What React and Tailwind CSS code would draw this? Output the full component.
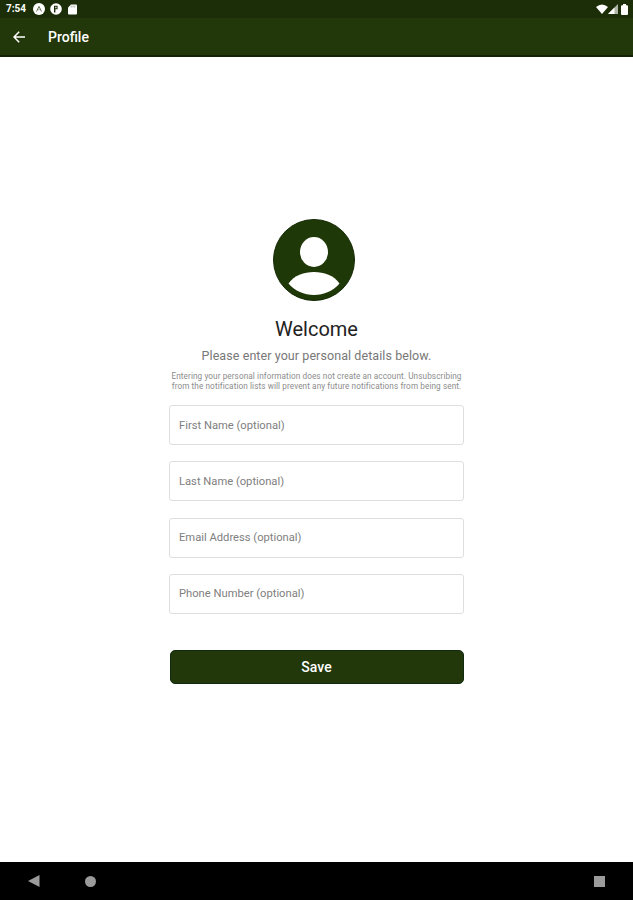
import React from 'react';

const fields = [
  { name: 'firstName', type: 'text', label: 'First Name (optional)' },
  { name: 'lastName', type: 'text', label: 'Last Name (optional)' },
  { name: 'email', type: 'email', label: 'Email Address (optional)' },
  { name: 'phone', type: 'tel', label: 'Phone Number (optional)' },
];

const StatusBar = () => (
  <div className="flex h-[18px] items-center justify-between bg-[#1c2e07] pl-[6px] pr-[5px] text-white">
    <div className="flex items-center">
      <span className="w-[27px] text-[10px] font-bold leading-[18px]">7:54</span>
      <svg width="12" height="12" viewBox="0 0 12 12">
        <circle cx="6" cy="6" r="6" fill="#fff" />
        <path d="M3.5 8.5 6 3.4l2.5 5.1M6 6.2v1" fill="none" stroke="#1c2e07" strokeWidth="0.9" opacity="0.75" />
      </svg>
      <svg width="12" height="12" viewBox="0 0 12 12" className="ml-[5px]">
        <circle cx="6" cy="6" r="5.8" fill="#fff" />
        <path d="M4 2.8h3.6v3.4H5.4v3.2H4z" fill="#1c2e07" />
        <path d="M5.3 3.8h1.2v1.5H5.3z" fill="#fff" />
      </svg>
      <svg width="9" height="11" viewBox="0 0 9 11" className="ml-[6px]">
        <path d="M3 .5h5a1 1 0 0 1 1 1v8a1 1 0 0 1-1 1H1a1 1 0 0 1-1-1V3.5z" fill="#fff" />
        <path d="M3.2 1.5v2M5 1.5v2M6.8 1.5v2" stroke="#1c2e07" strokeWidth="0.6" opacity="0.6" />
      </svg>
    </div>
    <div className="flex items-center">
      <svg width="12" height="10" viewBox="0 0 12 10">
        <path d="M0 3Q6-2 12 3L6 10z" fill="#fff" />
      </svg>
      <svg width="10" height="10" viewBox="0 0 10 10">
        <path d="M10 0v10H0z" fill="#fff" opacity="0.65" />
        <path d="M6.5 3.5V10H0z" fill="#fff" />
      </svg>
      <svg width="7" height="11" viewBox="0 0 7 11" className="ml-[3px]">
        <path d="M2 0h3v1.2h1a1 1 0 0 1 1 1V10a1 1 0 0 1-1 1H1a1 1 0 0 1-1-1V2.2a1 1 0 0 1 1-1h1z" fill="#fff" />
      </svg>
    </div>
  </div>
);

const AppBar = () => (
  <header className="flex h-[39px] items-center border-b-2 border-[#142205] bg-[#22380a] pl-[13px] text-white">
    <button type="button" aria-label="Back" className="mr-[23px]">
      <svg width="12" height="12" viewBox="0 0 12 12" fill="none" stroke="#fff" strokeWidth="1.5">
        <path d="M12 6H1.2M6.2.8 1 6l5.2 5.2" />
      </svg>
    </button>
    <h1 className="text-[14px] font-medium leading-[20px]">Profile</h1>
  </header>
);

const Avatar = () => (
  <svg width="82" height="82" viewBox="0 0 82 82" className="mr-[5px]">
    <circle cx="41" cy="41" r="40.5" fill="#1f3808" stroke="#142a05" />
    <ellipse cx="41" cy="33" rx="14" ry="15" fill="#fff" />
    <path d="M15.5 64.5C21 56.5 31 53 41 53s20 3.5 25.5 11.5C60 72 51 76 41 76S22 72 15.5 64.5z" fill="#fff" />
  </svg>
);

const NavBar = () => (
  <nav className="flex h-[38px] items-center bg-black px-[28px]">
    <svg width="12" height="12" viewBox="0 0 12 12">
      <path d="M11.5 0v12L0 6z" fill="#9b9b9b" />
    </svg>
    <span className="ml-[45px] size-[11px] rounded-full bg-[#9b9b9b]" />
    <span className="ml-auto size-[11px] bg-[#9b9b9b]" />
  </nav>
);

const App = () => (
  <div className="flex h-screen flex-col bg-white font-['Roboto',sans-serif]">
    <StatusBar />
    <AppBar />

    <main className="flex flex-1 flex-col items-center pt-[162px]">
      <Avatar />
      <h2 className="mt-[15px] text-[20px] leading-[26px] text-[#222]">Welcome</h2>
      <p className="mt-[6px] text-[12.5px] leading-[16px] tracking-[0.08px] text-[#777]">
        Please enter your personal details below.
      </p>
      <p className="mt-[8px] whitespace-nowrap text-center text-[8.2px] leading-[9.5px] tracking-[0.09px] text-[#8c8c8c]">
        Entering your personal information does not create an account. Unsubscribing
        <br />
        from the notification lists will prevent any future notifications from being sent.
      </p>

      <form className="mt-[14px] flex w-[295px] flex-col gap-[16.3px]">
        {fields.map(field => (
          <input
            key={field.name}
            type={field.type}
            name={field.name}
            placeholder={field.label}
            className="h-[40px] rounded-[3px] border border-[#dedede] bg-white px-[9px] text-[11.2px] text-[#333] outline-none placeholder:text-[#808080]"
          />
        ))}
        <button
          type="button"
          className="mx-[0.5px] mt-[20px] h-[34px] rounded-[5px] border border-[#102b10] bg-[#22380a] text-[14px] font-medium text-white"
        >
          Save
        </button>
      </form>
    </main>

    <NavBar />
  </div>
);

export default App;
